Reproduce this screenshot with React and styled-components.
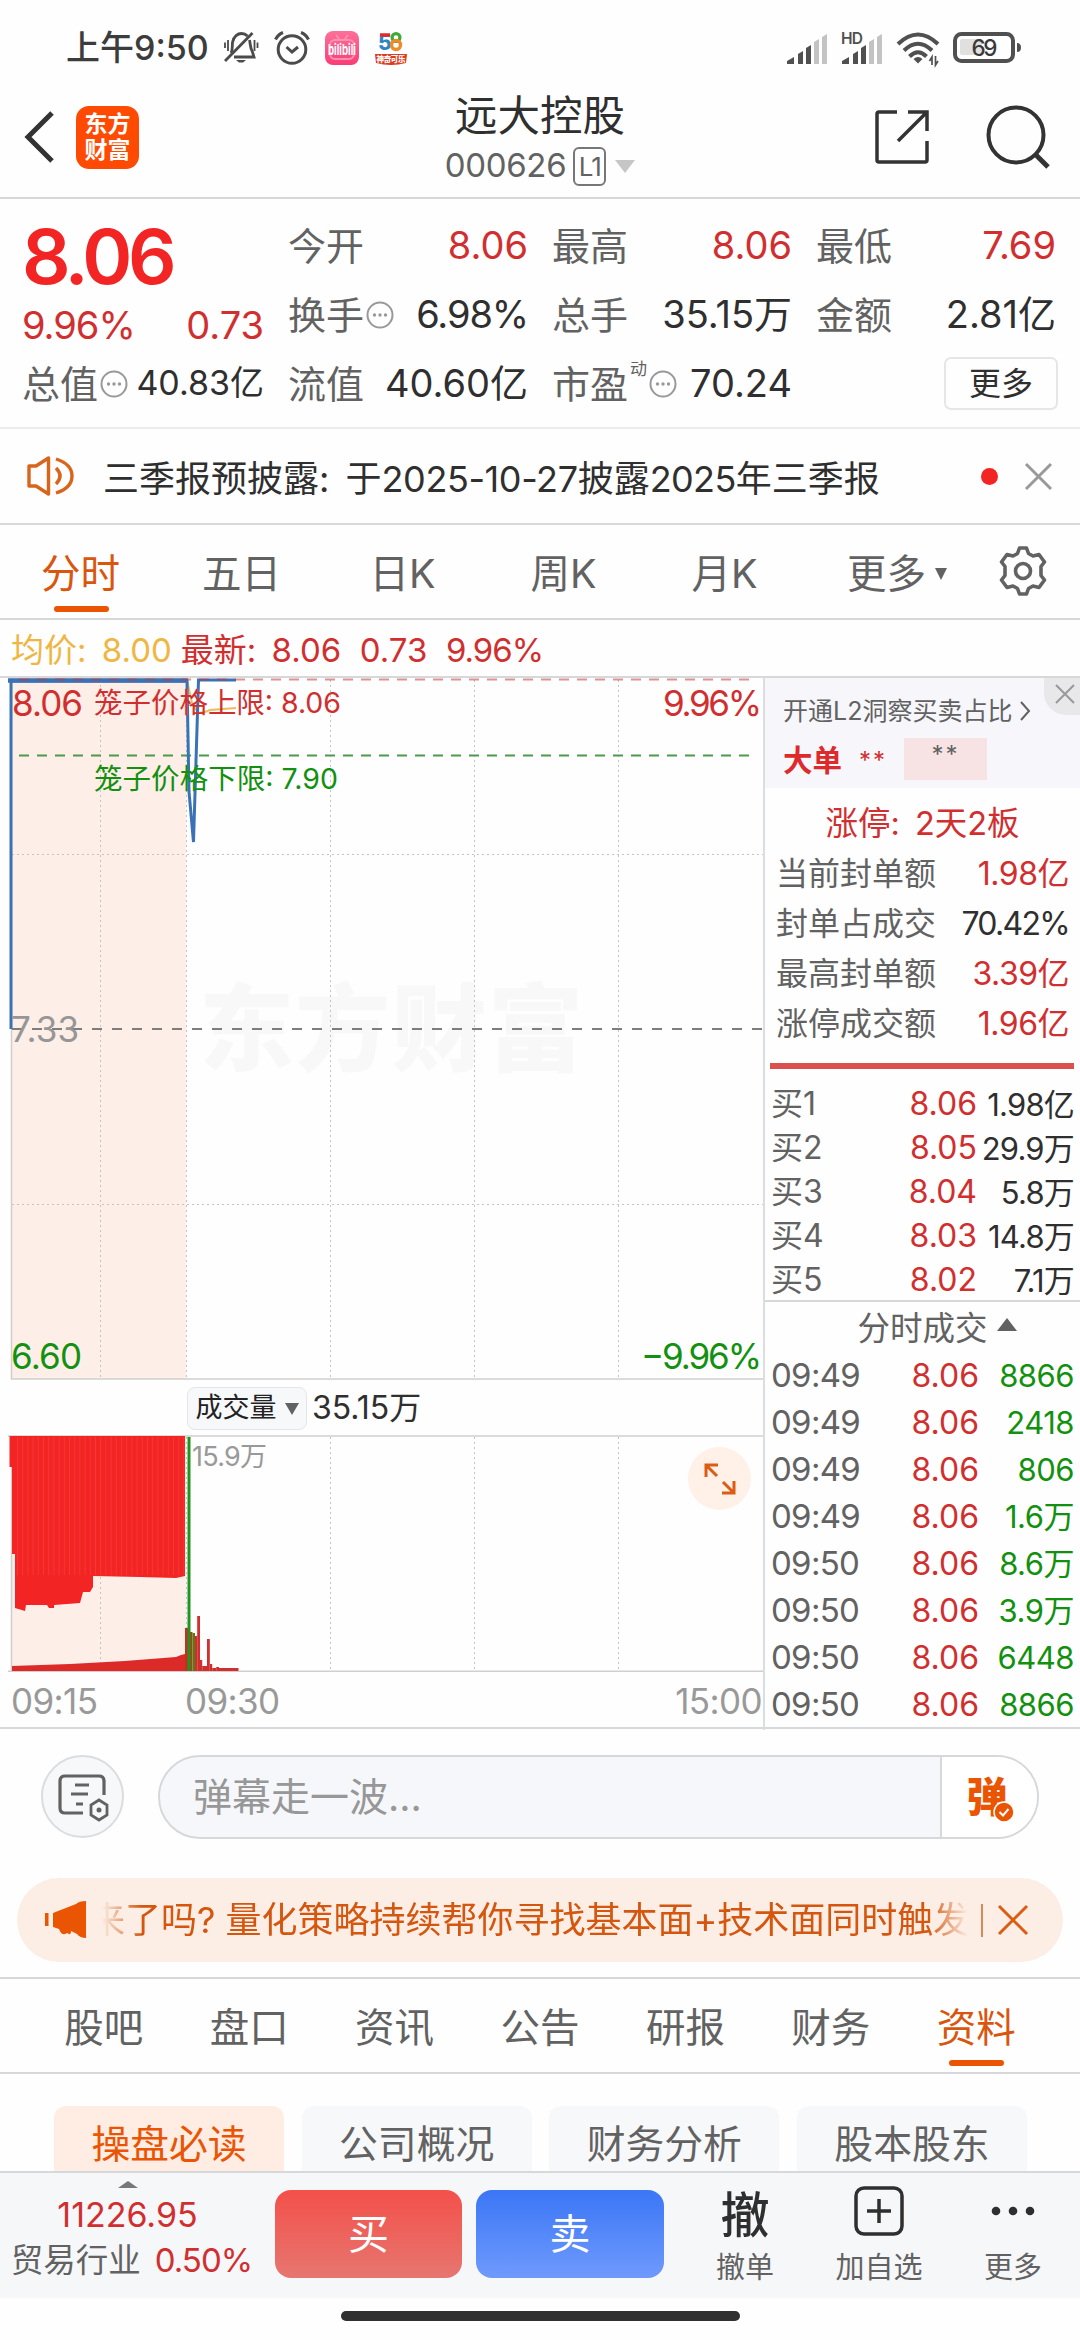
import React from "react";
import styled, { createGlobalStyle } from "styled-components";

const RED = "#d12f2f";
const BRIGHT = "#f22424";
const GREEN = "#12900f";
const ORANGE = "#ea5504";
const DARK = "#2f2f2f";
const GREY = "#626262";
const LINE = "#d6d8da";

const GlobalStyle = createGlobalStyle`
    * {
        box-sizing: border-box;
    }
    body {
        margin: 0;
        background: #fff;
        font-family: Inter, "Noto Sans CJK SC", sans-serif;
        color: ${DARK};
    }
    button {
        font-family: inherit;
        padding: 0;
        margin: 0;
        border: none;
        background: none;
    }
    svg {
        display: block;
        flex: none;
        overflow: visible;
    }
`;

const Page = styled.div`
    width: 1080px;
    height: 2340px;
    overflow: hidden;
    display: flex;
    flex-direction: column;
    background: #fefefe;
`;

const Txt = styled.span`
    font-size: ${(p) => p.$size || 32}px;
    line-height: 1.2;
    font-weight: ${(p) => p.$weight || 400};
    letter-spacing: ${(p) => p.$ls || 0}px;
    color: ${(p) => p.$color || "inherit"};
    white-space: pre;
`;

// colon followed by a wider gap, as after Chinese labels
const Colon = styled.span`
    letter-spacing: 6px;

    &::after {
        content: ":";
    }
`;

const Num = styled.span`
    letter-spacing: ${(p) => p.$ls}px;
`;

/* ---------- status bar ---------- */
const StatusBar = styled.div`
    height: 92px;
    padding: 4px 58px 0 66px;
    display: flex;
    justify-content: space-between;
    align-items: center;
`;

const StatusGroup = styled.div`
    display: flex;
    align-items: center;
    gap: ${(p) => p.$gap || 0}px;
`;

/* ---------- header ---------- */
const Header = styled.header`
    height: 107px;
    border-bottom: 2px solid ${LINE};
    padding: 0 30px 0 24px;
    display: grid;
    grid-template-columns: 1fr auto 1fr;
    align-items: center;
`;

const HeaderSide = styled.div`
    display: flex;
    align-items: center;
    justify-content: ${(p) => (p.$end ? "flex-end" : "flex-start")};
    gap: ${(p) => (p.$end ? 57 : 21)}px;
    padding-bottom: 15px;
`;

const Logo = styled.div`
    width: 63px;
    height: 63px;
    border-radius: 13px;
    background: #fe4a02;
    color: #fff;
    font-size: 23px;
    line-height: 26px;
    font-weight: 700;
    text-align: center;
    padding-top: 5px;
`;

const Title = styled.div`
    display: flex;
    flex-direction: column;
    align-items: center;
    padding: 0 0 5px 6px;
`;

const Name = styled.div`
    font-size: 42.5px;
    line-height: 50px;
    margin-top: -2px;
`;

const Code = styled.div`
    display: flex;
    align-items: center;
    height: 50px;
    color: ${GREY};
`;

const Level = styled.span`
    width: 33px;
    height: 39px;
    margin: 0 9px 0 7px;
    border: 2px solid #777;
    border-radius: 6px;
    font-size: 26px;
    line-height: 35px;
    text-align: center;
    letter-spacing: -1px;
`;

const Triangle = styled.i`
    width: 0;
    height: 0;
    border-left: ${(p) => p.$w / 2}px solid transparent;
    border-right: ${(p) => p.$w / 2}px solid transparent;
    ${(p) => (p.$up ? "border-bottom" : "border-top")}: ${(p) => p.$h}px solid
        ${(p) => p.$color};
`;

/* ---------- quote ---------- */
const Quote = styled.section`
    height: 230px;
    padding: 12px 24px 0 22px;
    border-bottom: 2px solid #ebecee;
    display: grid;
    grid-template-columns: 242px 792px;
`;

const PriceCol = styled.div`
    display: flex;
    flex-direction: column;
`;

const BigPrice = styled.div`
    height: 91px;
    font-size: 76px;
    line-height: 91px;
    font-weight: 600;
    letter-spacing: -4.4px;
    color: ${BRIGHT};
`;

const Pair = styled.div`
    height: ${(p) => p.$h || 69}px;
    display: flex;
    align-items: center;
    justify-content: space-between;
`;

const Label = styled.span`
    display: flex;
    align-items: center;
    gap: 2px;
    font-size: 38px;
    line-height: 46px;
    color: ${GREY};
`;

const Sup = styled.sup`
    align-self: flex-start;
    font-size: 17px;
    line-height: 17px;
`;

const Stats = styled.div`
    display: grid;
    grid-template-columns: repeat(3, 240px);
    grid-auto-rows: 69px;
    column-gap: 24px;
    padding-left: 24px;
`;

const MoreButton = styled.button`
    justify-self: end;
    align-self: center;
    width: 114px;
    height: 53px;
    margin-right: -2px;
    border: 2px solid #e6e6e8;
    border-radius: 7px;
    font-size: 32px;
    line-height: 46px;
    color: ${DARK};
`;

/* ---------- notice ---------- */
const Notice = styled.section`
    height: 96px;
    padding: 0 28px 0 26px;
    border-bottom: 2px solid ${LINE};
    display: flex;
    align-items: center;
`;

const NoticeText = styled.div`
    flex: 1;
    padding-left: 29px;
    font-size: 36px;
    white-space: pre;
`;

const Dot = styled.i`
    width: 17px;
    height: 17px;
    border-radius: 50%;
    background: ${BRIGHT};
    margin-right: 27px;
`;

/* ---------- tabs ---------- */
const Tabs = styled.nav`
    height: ${(p) => p.$h || 95}px;
    border-top: ${(p) => (p.$ruled ? `2px solid ${LINE}` : "none")};
    border-bottom: 2px solid ${LINE};
    padding: ${(p) => p.$pad || 0};
    display: grid;
    grid-template-columns: ${(p) => p.$cols};
`;

const Tab = styled.button`
    display: flex;
    align-items: center;
    justify-content: center;
    gap: 9px;
    position: relative;
    font-size: 39.5px;
    line-height: 48px;
    padding: 4px 0 0 ${(p) => p.$pl || 0}px;
    color: ${(p) => (p.$active ? "#d9560f" : GREY)};

    &::after {
        content: "";
        display: ${(p) => (p.$active ? "block" : "none")};
        position: absolute;
        bottom: 6px;
        left: calc(50% - 27px);
        width: 55px;
        height: 6px;
        border-radius: 3px;
        background: ${ORANGE};
    }
`;

const GearTab = styled(Tab)`
    padding-top: 0;
    padding-bottom: 2px;
`;

/* ---------- chart + order book ---------- */
const Latest = styled.div`
    height: 58px;
    border-bottom: 2px solid ${LINE};
    padding: 6px 0 0 11px;
    display: flex;
    align-items: center;
    gap: 9px;
`;

const Market = styled.section`
    height: 1051px;
    border-bottom: 2px solid ${LINE};
    display: grid;
    grid-template-columns: 763px 317px;
`;

const ChartCol = styled.div`
    display: flex;
    flex-direction: column;
    position: relative;
`;

const VolumeHead = styled.div`
    height: 55px;
    padding: 2px 0 0 187px;
    display: flex;
    align-items: center;
    gap: 5px;
`;

const VolumeSelect = styled.button`
    width: 120px;
    height: 43px;
    border: 1px solid #e3e5e9;
    border-radius: 8px;
    background: #f7f8fa;
    display: flex;
    align-items: center;
    justify-content: center;
    gap: 8px;
    color: #222;
`;

const Expand = styled.button`
    position: absolute;
    left: 688px;
    top: 769px;
    width: 63px;
    height: 63px;
    border-radius: 50%;
    background: #fff0e8;
    display: flex;
    align-items: center;
    justify-content: center;
`;

const TimeAxis = styled.div`
    height: 58px;
    padding: 0 1px 0 11px;
    display: grid;
    grid-template-columns: 174px 1fr auto;
    align-items: center;
    color: #999;
`;

const Book = styled.aside`
    border-left: 2px solid #dcdde0;
    display: flex;
    flex-direction: column;
`;

const Promo = styled.div`
    position: relative;
    height: 110px;
    background: #f7f7fb;
    padding: 15px 18px 0 18px;
`;

const PromoTitle = styled.div`
    display: flex;
    align-items: center;
    gap: 7px;
    height: 36px;
    color: ${GREY};
`;

const PromoRow = styled.div`
    display: flex;
    align-items: center;
    gap: 17px;
    height: 50px;
    margin-top: 7px;
`;

const PinkBox = styled.div`
    width: 83px;
    height: 42px;
    margin-top: -4px;
    background: #f8e3e4;
    text-align: center;
    line-height: 38px;
`;

const PromoClose = styled.button`
    position: absolute;
    right: 0;
    top: 0;
    width: 36px;
    height: 37px;
    border-bottom-left-radius: 22px;
    background: #e8e8ea;
    display: flex;
    align-items: center;
    justify-content: center;
    padding-left: 5px;
    padding-bottom: 5px;
`;

const LimitTitle = styled.div`
    height: 60px;
    padding-top: 11px;
    display: flex;
    align-items: center;
    justify-content: center;
    color: ${RED};
`;

const LimitRow = styled.div`
    height: 50px;
    padding: 2px 11px 0 11px;
    display: flex;
    align-items: center;
    justify-content: space-between;
`;

const RedBar = styled.div`
    height: 6px;
    margin: 15px 6px 13px 5px;
    background: #d9504f;
`;

const BookRow = styled.div`
    height: ${(p) => p.$h}px;
    padding: 1px 6px 0 6px;
    display: grid;
    grid-template-columns: 1fr auto ${(p) => p.$last}px;
    align-items: center;

    & > :last-child {
        text-align: right;
    }
`;

const DealTitle = styled.div`
    margin-top: -2px;
    height: 52px;
    padding: 2px 0 0 29px;
    border-top: 2px solid ${LINE};
    display: flex;
    align-items: center;
    justify-content: center;
    gap: 9px;
    color: ${GREY};

    i {
        margin-bottom: 7px;
    }
`;

/* ---------- comment bar ---------- */
const Danmu = styled.section`
    height: 135px;
    padding: 0 41px 0 41px;
    display: flex;
    align-items: center;
    justify-content: space-between;
`;

const RoundButton = styled.button`
    width: 83px;
    height: 83px;
    border: 2px solid #dadde0;
    border-radius: 50%;
    background: #f7f8fa;
    display: flex;
    align-items: center;
    justify-content: center;
`;

const InputPill = styled.div`
    width: 881px;
    height: 84px;
    border: 2px solid ${LINE};
    border-radius: 42px;
    background: #f6f7fa;
    overflow: hidden;
    display: flex;
`;

const Placeholder = styled.div`
    flex: 1;
    padding-left: 33px;
    font-size: 39px;
    line-height: 80px;
    color: #979797;
`;

const SendToggle = styled.button`
    position: relative;
    width: 97px;
    border-left: 2px solid ${LINE};
    background: #fff;
    padding: 0 5px 5px 0;
    font-size: 41px;
    font-weight: 900;
    color: ${ORANGE};

    svg {
        position: absolute;
        left: 51px;
        top: 44px;
    }
`;

/* ---------- marquee banner ---------- */
const Banner = styled.section`
    height: 84px;
    margin: 14px 17px 15px;
    padding: 0 35px 0 27px;
    border-radius: 42px;
    background: #fceee5;
    display: flex;
    align-items: center;
`;

const Marquee = styled.div`
    flex: 1;
    margin: 0 13px 0 14px;
    overflow: hidden;
    display: flex;
    font-size: 36px;
    line-height: 52px;
    white-space: pre;
    color: #d4560f;
    mask-image: linear-gradient(
        90deg,
        transparent 0,
        #000 40px,
        #000 calc(100% - 40px),
        transparent 100%
    );

    span {
        margin-left: -13px;
    }
`;

const Divider = styled.i`
    width: 2px;
    height: 33px;
    background: #d98a5c;
    margin-right: 15px;
`;

/* ---------- chips ---------- */
const Chips = styled.div`
    height: 97px;
    padding: 32px 53px 0 54px;
    overflow: hidden;
    display: flex;
    justify-content: space-between;
`;

const Chip = styled.button`
    width: 230px;
    height: 80px;
    padding-bottom: 5px;
    border-radius: 12px;
    font-size: 38.8px;
    line-height: 60px;
    background: ${(p) => (p.$active ? "#ffede4" : "#f7f8fa")};
    color: ${(p) => (p.$active ? ORANGE : GREY)};
`;

/* ---------- bottom bar ---------- */
const BottomBar = styled.footer`
    height: 127px;
    border-top: 2px solid ${LINE};
    background: #f6f7f9;
    display: flex;
`;

const IndexBox = styled.div`
    width: 275px;
    padding: 8px 20px 0 0;
    display: flex;
    flex-direction: column;
    align-items: center;
    gap: 7px;
`;

const Industry = styled.div`
    display: flex;
    align-items: center;
    gap: 14px;
    margin-top: -2px;
    padding-left: 8px;
`;

const TradeButton = styled.button`
    width: ${(p) => p.$w}px;
    height: 88px;
    margin: 17px 14px 0 0;
    border-radius: 16px;
    color: #fff;
    font-size: 41px;
    line-height: 88px;
    background: ${(p) =>
        p.$sell
            ? "linear-gradient(#3b76f6, #6f9afc)"
            : "linear-gradient(#f4504a, #e77670)"};
`;

const Action = styled.button`
    width: 134px;
    display: flex;
    flex-direction: column;
    align-items: center;
    gap: 8px;
    color: ${DARK};
`;

const ActionIcon = styled.div`
    height: 70px;
    padding-top: 6px;
    display: flex;
    align-items: center;
    font-size: 49px;
    font-weight: 500;
`;

const HomeArea = styled.div`
    flex: 1;
    display: flex;
    justify-content: center;
    padding-top: 13px;
`;

const HomeBar = styled.div`
    width: 399px;
    height: 10px;
    border-radius: 5px;
    background: #303030;
`;

/* ---------- icons ---------- */
const Muted = () => (
    <svg width="36" height="36" viewBox="0 0 36 36" fill="none" stroke="#4b4b4b" strokeWidth="2.8">
        <path d="M8 23C10 20 9 16 9.500 12.500C10.500 6 15 3.500 18.500 3.500C21 3.500 23 4.500 24.500 6" />
        <path d="M26.500 10C27.500 14 27 18 29.500 22L31 27H11" />
        <path d="M2 31L29.500 3" />
        <path d="M5 10V21M2 12.500V18M31.500 10V21M34.500 12.500V18" strokeWidth="1.800" />
        <path d="M13 30H23L20 32.500H16Z" fill="#4b4b4b" stroke="none" />
    </svg>
);

const Alarm = () => (
    <svg width="36" height="36" viewBox="0 0 36 36" fill="none" stroke="#4b4b4b" strokeWidth="3">
        <circle cx="18" cy="19.500" r="13.800" />
        <path d="M1.500 9.500Q4 4.500 9 2.500M34.500 9.500Q32 4.500 27 2.500" />
        <path d="M12.500 17L18 22L24 17" />
    </svg>
);

const BiliIcon = () => (
    <svg width="34" height="34" viewBox="0 0 34 34">
        <defs>
            <linearGradient id="bili" x1="0" y1="0" x2="0" y2="1">
                <stop offset="0" stopColor="#fb7199" />
                <stop offset="1" stopColor="#fb3c76" />
            </linearGradient>
        </defs>
        <rect width="34" height="34" rx="8" fill="url(#bili)" />
        <rect x="5" y="9" width="24" height="19" rx="5" fill="none" stroke="#fd8fb0" strokeWidth="2" />
        <path d="M11 4L15 9M23 4L19 9" stroke="#fd8fb0" strokeWidth="2" />
        <text x="3" y="24" fontSize="15" fontWeight="700" fill="#fff" textLength="28" lengthAdjust="spacingAndGlyphs">
            bilibili
        </text>
    </svg>
);

const App58 = () => (
    <svg width="34" height="34" viewBox="0 0 34 34">
        <text x="4" y="18.500" fontSize="21" fontWeight="800" fill="#2a86c9">5</text>
        <path d="M6 4H16" stroke="#e02a2a" strokeWidth="3.500" />
        <circle cx="22" cy="6.500" r="3.900" fill="none" stroke="#42a836" strokeWidth="3.200" />
        <circle cx="22" cy="14" r="4.500" fill="none" stroke="#f08a24" strokeWidth="3.400" />
        <path d="M1 23H33L32 32Q17 36 2 32Z" fill="#dd3a1e" />
        <text x="2.500" y="31" fontSize="7.500" fontWeight="900" fill="#fff" textLength="29">神奇可乐</text>
    </svg>
);

const Signal = ({ hd }) => (
    <svg width="42" height="36" viewBox="0 0 42 36" fill="#505050">
        <path d="M1 34V31L8 27V34Z" />
        <path d="M12 34V24L17 21V34Z" />
        <path d="M20 34V18L25 15V34Z" />
        <path d="M28 34V12L33 9V34Z" fill="#c3c3c3" />
        <path d="M36 34V7L41 4V34Z" fill="#c3c3c3" />
        {hd && (
            <text x="0" y="14" fontSize="15.500" fontWeight="600" textLength="22">HD</text>
        )}
    </svg>
);

const Wifi = () => (
    <svg width="44" height="36" viewBox="0 0 44 36" fill="none" stroke="#505050" strokeWidth="4">
        <path d="M2 14Q22 -5 42 14" />
        <path d="M8 20.500Q22 7 36 20.500" />
        <path d="M13.500 26.500Q22 18 30.500 26.500" />
        <path d="M17.500 29Q22 25 26.500 29L22 33.500Z" fill="#505050" stroke="none" />
        <path d="M36 35V27L33.500 31M39.500 26V35L42 31" strokeWidth="1.700" />
    </svg>
);

const Battery = () => (
    <svg width="69" height="32" viewBox="0 0 69 32">
        <rect x="2" y="2" width="58" height="27" rx="6.500" fill="#fff" stroke="#505050" strokeWidth="4" />
        <rect x="7" y="7" width="22" height="16" rx="2" fill="#e0e0e0" />
        <path d="M64 11Q68 11 68 15.500T64 20Z" fill="#505050" />
        <text x="18.500" y="23.500" fontSize="22.500" fontWeight="500" fill="#3a3a3a" textLength="26">69</text>
    </svg>
);

const Info = () => (
    <svg width="28" height="28" viewBox="0 0 28 28" fill="none" stroke="#999" strokeWidth="2">
        <circle cx="14" cy="14" r="12.500" />
        <g fill="#999" stroke="none">
            <circle cx="8.500" cy="14" r="1.700" />
            <circle cx="14" cy="14" r="1.700" />
            <circle cx="19.500" cy="14" r="1.700" />
        </g>
    </svg>
);

const Cross = ({ size, color, w = 3 }) => (
    <svg width={size} height={size} viewBox={`0 0 ${size} ${size}`} stroke={color} strokeWidth={w}>
        <path d={`M1 1L${size - 1} ${size - 1}M${size - 1} 1L1 ${size - 1}`} />
    </svg>
);

const Gear = () => (
    <svg width="48" height="50" viewBox="0 0 48 50" fill="none" stroke="#626262" strokeWidth="3.600" strokeLinejoin="round">
        <path d="M20.500 2H27.500L29.500 7.500L34 10L40 8.500L45.500 16L42 20.500V29.500L45.500 34L40 41.500L34 40L29.500 42.500L27.500 48H20.500L18.500 42.500L14 40L8 41.500L2.500 34L6 29.500V20.500L2.500 16L8 8.500L14 10L18.500 7.500Z" />
        <circle cx="24" cy="25" r="7.500" />
    </svg>
);

const Speaker = () => (
    <svg width="48" height="40" viewBox="0 0 48 40" fill="none" stroke="#d9641c" strokeWidth="3.400" strokeLinejoin="round">
        <path d="M3 10H10L22.500 2V38L10 30H3Z" />
        <path d="M30 12Q38 20 30 28" />
        <path d="M30 3Q46 8 46 20T30 37" />
    </svg>
);

/* ---------- data ---------- */
const stats = [
    { label: "今开", value: "8.06", red: true },
    { label: "最高", value: "8.06", red: true },
    { label: "最低", value: "7.69", red: true },
    { label: "换手", value: "6.98%", info: true, ls: -1.1 },
    { label: "总手", value: "35.15万" },
    { label: "金额", value: "2.81亿" },
    { label: "流值", value: "40.60亿" },
    { label: "市盈", value: "70.24", sup: "动", info: true },
];

const limits = [
    ["当前封单额", "1.98亿", RED, -0.5],
    ["封单占成交", "70.42%", DARK, -1.7],
    ["最高封单额", "3.39亿", RED, -0.5],
    ["涨停成交额", "1.96亿", RED, -0.5],
];

const bids = [
    ["买1", "8.06", "1.98亿"],
    ["买2", "8.05", "29.9万"],
    ["买3", "8.04", "5.8万"],
    ["买4", "8.03", "14.8万"],
    ["买5", "8.02", "7.1万"],
];

const deals = [
    ["09:49", "8866"],
    ["09:49", "2418"],
    ["09:49", "806"],
    ["09:49", "1.6万"],
    ["09:50", "8.6万"],
    ["09:50", "3.9万"],
    ["09:50", "6448"],
    ["09:50", "8866"],
];

const periods = ["分时", "五日", "日K", "周K", "月K"];
const sections = ["股吧", "盘口", "资讯", "公告", "研报", "财务", "资料"];
const chips = ["操盘必读", "公司概况", "财务分析", "股本股东"];

// bars after the open: [x, width, height, colour]
const volumes = [
    [185, 3, 43, "#c4301e"],
    [190, 2.5, 39, "#a8401a"],
    [192.5, 2.5, 38, "#5a7a10"],
    [195, 2.2, 35, RED],
    [197.2, 2.8, 55, RED],
    [200, 2.2, 11, RED],
    [202.2, 4.8, 5, RED],
    [207, 2.8, 32, RED],
    [209.8, 2.4, 7, RED],
    [212.2, 4, 3, RED],
    [216.2, 2.8, 4, RED],
    [219, 19.5, 3, RED],
];

const gridX = [100.5, 186.5, 330.5, 474.5, 618.5];

function PriceChart() {
    return (
        <svg width="763" height="702" viewBox="0 678 763 702">
            <rect x="12" y="678" width="174" height="701" fill="#fdeee7" />
            <text x="199" y="1064" fontSize="95" fontWeight="900" fill="#f8f8f8" textLength="384">
                东方财富
            </text>
            <g stroke="#c4c4c4" strokeWidth="1" strokeDasharray="2 3">
                {gridX.map((x) => (
                    <path key={x} d={`M${x} 680V1379`} />
                ))}
                <path d="M12 854.500H763M12 1204.500H763" />
            </g>
            <path d="M11.500 678V1379H763" fill="none" stroke="#cfcfcf" strokeWidth="1.500" />
            <path d="M12 1029H763" stroke="#7d7d7d" strokeWidth="2" strokeDasharray="10 10" />
            <path d="M19 755.500H750" stroke="#4d9a4b" strokeWidth="1.800" strokeDasharray="10 8" />
            <path d="M187 680L192 703L198 713L205 712L210 710L236 708" fill="none" stroke="#efbc55" strokeWidth="2" />
            <path d="M11 1029V681H187L189 792L193.500 842L198.500 680H236" fill="none" stroke="#3a72b5" strokeWidth="3" />
            <path d="M8 680.500H188" stroke="#3a72b5" strokeWidth="4.500" />
            <path d="M19 679.500H750" stroke="#c43a3f" strokeOpacity="0.550" strokeWidth="2" strokeDasharray="10 8" />
            <g fontSize="35">
                <text x="12" y="716" fill={RED} textLength="71">8.06</text>
                <text x="663" y="716" fill={RED} textLength="99">9.96%</text>
                <text x="11" y="1042" fill="#969696" textLength="68">7.33</text>
                <text x="11" y="1369" fill={GREEN} textLength="71">6.60</text>
                <text x="641" y="1369" fill={GREEN} textLength="121">−9.96%</text>
            </g>
            <g fontSize="28.500">
                <text x="94" y="713" fill={RED} textLength="247">笼子价格上限: 8.06</text>
                <text x="94" y="789" fill={GREEN} textLength="244">笼子价格下限: 7.90</text>
            </g>
        </svg>
    );
}

function VolumeChart() {
    return (
        <svg width="763" height="237" viewBox="0 1435 763 237">
            <rect x="12" y="1437" width="174" height="234" fill="#fdeee7" />
            <g stroke="#c4c4c4" strokeWidth="1" strokeDasharray="2 3">
                {gridX.map((x) => (
                    <path key={x} d={`M${x} 1437V1671`} />
                ))}
            </g>
            <path d="M11.500 1436V1671M8 1436H763M8 1671.300H763" stroke="#cfcfcf" strokeWidth="1.500" />
            <path
                d="M9.500 1436H185V1576L176 1578L140 1577L93 1576V1587L90 1592H83L80 1603L54 1605V1608H49L47 1605H26L25 1611L15 1608V1554H12V1467H9.500Z"
                fill={BRIGHT}
            />
            <path d="M12 1671V1666L70 1664L125 1661L176 1657L181 1655L185 1654V1671Z" fill="#dc2a28" />
            <g stroke="#fb4a48" strokeWidth="0.500">
                {Array.from({ length: 33 }, (_, i) => (
                    <path key={i} d={`M${17.5 + i * 5.2} 1437V1575`} />
                ))}
            </g>
            {volumes.map(([x, w, h, color]) => (
                <rect key={x} x={x} y={1671 - h} width={w} height={h} fill={color} />
            ))}
            <rect x="187.500" y="1437" width="3" height="234" fill="#20941e" />
            <text x="192" y="1466" fontSize="27" fill="#999" textLength="75">15.9万</text>
        </svg>
    );
}

function Stat({ label, value, red, info, sup, ls }) {
    return (
        <Pair>
            <Label>
                {label}
                {sup && <Sup>{sup}</Sup>}
                {info && <Info />}
            </Label>
            <Txt $size={38} $ls={ls} $color={red ? RED : DARK}>
                {value}
            </Txt>
        </Pair>
    );
}

function OrderBook() {
    return (
        <Book>
            <Promo>
                <PromoTitle>
                    <Txt $size={25}>开通L2洞察买卖占比</Txt>
                    <svg width="12" height="20" viewBox="0 0 12 20" fill="none" stroke="#626262" strokeWidth="2">
                        <path d="M2 1L10 10L2 19" />
                    </svg>
                </PromoTitle>
                <PromoRow>
                    <Txt $size={29.5} $weight={700} $color="#dd2a2a">大单</Txt>
                    <Txt $size={24} $ls={2} $color={RED}>**</Txt>
                    <PinkBox>
                        <Txt $size={24} $ls={2} $color={GREY}>**</Txt>
                    </PinkBox>
                </PromoRow>
                <PromoClose>
                    <Cross size={20} color="#999" w={2} />
                </PromoClose>
            </Promo>
            <LimitTitle>
                <Txt $size={32.5}>
                    涨停
                    <Colon /> 2天2板
                </Txt>
            </LimitTitle>
            {limits.map(([label, value, color, ls]) => (
                <LimitRow key={label}>
                    <Txt $size={32} $color={GREY}>{label}</Txt>
                    <Txt $size={32} $ls={ls} $color={color}>{value}</Txt>
                </LimitRow>
            ))}
            <RedBar />
            {bids.map(([label, price, amount]) => (
                <BookRow key={label} $h={44} $last={97}>
                    <Txt $size={32} $color={GREY}>{label}</Txt>
                    <Txt $size={32} $color={RED}>{price}</Txt>
                    <Txt $size={31} $ls={-0.8}>{amount}</Txt>
                </BookRow>
            ))}
            <DealTitle>
                <Txt $size={32.5}>分时成交</Txt>
                <Triangle $up $w={20} $h={13} $color={GREY} />
            </DealTitle>
            {deals.map(([time, amount], i) => (
                <BookRow key={i} $h={47} $last={95}>
                    <Txt $size={33} $ls={-0.7} $color={GREY}>{time}</Txt>
                    <Txt $size={32} $color={RED}>8.06</Txt>
                    <Txt $size={31} $ls={-0.5} $color={GREEN}>{amount}</Txt>
                </BookRow>
            ))}
        </Book>
    );
}

export default function App() {
    return (
        <Page>
            <GlobalStyle />
            <StatusBar>
                <StatusGroup $gap={14}>
                    <Txt $size={34} $weight={500} $color="#3c3c3c">上午9:50</Txt>
                    <StatusGroup $gap={15}>
                        <Muted />
                        <Alarm />
                        <BiliIcon />
                        <App58 />
                    </StatusGroup>
                </StatusGroup>
                <StatusGroup $gap={13}>
                    <Signal />
                    <Signal hd />
                    <Wifi />
                    <Battery />
                </StatusGroup>
            </StatusBar>

            <Header>
                <HeaderSide>
                    <svg width="31" height="52" viewBox="0 0 31 52" fill="none" stroke="#333" strokeWidth="5">
                        <path d="M28 2L4 26L28 50" />
                    </svg>
                    <Logo>
                        东方
                        <br />
                        财富
                    </Logo>
                </HeaderSide>
                <Title>
                    <Name>远大控股</Name>
                    <Code>
                        <Txt $size={33} $ls={-0.3}>000626</Txt>
                        <Level>L1</Level>
                        <Triangle $w={21} $h={13} $color="#c6c6c6" />
                    </Code>
                </Title>
                <HeaderSide $end>
                    <svg width="54" height="54" viewBox="0 0 54 54" fill="none" stroke="#333" strokeWidth="3.500">
                        <path d="M22 2H4Q2 2 2 4V50Q2 52 4 52H50Q52 52 52 50V31" />
                        <path d="M33 2H52V21M52 2L23 31" />
                    </svg>
                    <svg width="64" height="64" viewBox="0 0 64 64" fill="none" stroke="#333" strokeWidth="4">
                        <circle cx="30" cy="30" r="27.500" />
                        <path d="M49 49L62 62" strokeWidth="5" />
                    </svg>
                </HeaderSide>
            </Header>

            <Quote>
                <PriceCol>
                    <BigPrice>8.06</BigPrice>
                    <Pair $h={47}>
                        <Txt $size={38} $ls={-1} $color={RED}>9.96%</Txt>
                        <Txt $size={38} $color={RED}>0.73</Txt>
                    </Pair>
                    <Pair>
                        <Label>
                            总值
                            <Info />
                        </Label>
                        <Txt $size={34}>40.83亿</Txt>
                    </Pair>
                </PriceCol>
                <Stats>
                    {stats.map((s) => (
                        <Stat key={s.label} {...s} />
                    ))}
                    <MoreButton>更多</MoreButton>
                </Stats>
            </Quote>

            <Notice>
                <Speaker />
                <NoticeText>
                    三季报预披露
                    <Colon /> 于<Num $ls={-0.4}>2025-10-27</Num>披露<Num $ls={-0.6}>2025</Num>年三季报
                </NoticeText>
                <Dot />
                <Cross size={27} color="#999" />
            </Notice>

            <Tabs $cols="repeat(5, 161px) 1fr 115px">
                {periods.map((p, i) => (
                    <Tab key={p} $active={i === 0}>{p}</Tab>
                ))}
                <Tab $pl={24}>
                    更多
                    <Triangle $w={13} $h={12} $color={GREY} />
                </Tab>
                <GearTab>
                    <Gear />
                </GearTab>
            </Tabs>

            <Latest>
                <Txt $size={33} $color="#efb643">
                    均价
                    <Colon /> 8.00
                </Txt>
                <Txt $size={33} $color={RED}>
                    最新
                    <Colon /> 8.06{"  "}0.73{"  "}
                    <Num $ls={-1}>9.96%</Num>
                </Txt>
            </Latest>

            <Market>
                <ChartCol>
                    <PriceChart />
                    <VolumeHead>
                        <VolumeSelect>
                            <Txt $size={27}>成交量</Txt>
                            <Triangle $w={14} $h={12} $color={GREY} />
                        </VolumeSelect>
                        <Txt $size={32}>35.15万</Txt>
                    </VolumeHead>
                    <VolumeChart />
                    <Expand>
                        <svg width="32" height="32" viewBox="0 0 32 32" fill="none" stroke="#dd5c14" strokeWidth="3">
                            <path d="M2 14V2H14M2 2L13 13" />
                            <path d="M30 18V30H18M30 30L19 19" />
                        </svg>
                    </Expand>
                    <TimeAxis>
                        <Txt $size={35} $ls={-0.6}>09:15</Txt>
                        <Txt $size={35} $ls={-0.6}>09:30</Txt>
                        <Txt $size={35} $ls={-0.6}>15:00</Txt>
                    </TimeAxis>
                </ChartCol>
                <OrderBook />
            </Market>

            <Danmu>
                <RoundButton>
                    <svg width="52" height="48" viewBox="0 0 52 48" fill="none" stroke="#626262" strokeWidth="3.200">
                        <path d="M26 40H8Q3 40 3 35V8Q3 3 8 3H42Q47 3 47 8V22" />
                        <path d="M18 12H32M14 21H31M19 31H26" />
                        <path d="M42 27L50 32V42L42 47L34 42V32Z" strokeWidth="2.800" />
                        <circle cx="42" cy="37" r="2.500" fill="#626262" stroke="none" />
                    </svg>
                </RoundButton>
                <InputPill>
                    <Placeholder>弹幕走一波...</Placeholder>
                    <SendToggle>
                        弹
                        <svg width="22" height="22" viewBox="0 0 22 22">
                            <circle cx="11" cy="11" r="10" fill={ORANGE} stroke="#fff" strokeWidth="1.500" />
                            <path d="M6.500 11L10 14.500L15.500 8" fill="none" stroke="#fff" strokeWidth="2" />
                        </svg>
                    </SendToggle>
                </InputPill>
            </Danmu>

            <Banner>
                <svg width="44" height="38" viewBox="0 0 44 38" fill={ORANGE}>
                    <path d="M1 12H4.500V25H1ZM9 12L32 3Q35 0 42 0V37Q36 37 33 33L31 32L27 30Q27 35 23 32Q18 36 15 28L9 26Z" />
                </svg>
                <Marquee>
                    <span>来了吗? 量化策略持续帮你寻找基本面+技术面同时触发</span>
                </Marquee>
                <Divider />
                <Cross size={30} color="#dd5c14" />
            </Banner>

            <Tabs $h={97} $ruled $cols="repeat(7, 1fr)" $pad="0 31px">
                {sections.map((s) => (
                    <Tab key={s} $active={s === "资料"}>{s}</Tab>
                ))}
            </Tabs>

            <Chips>
                {chips.map((c, i) => (
                    <Chip key={c} $active={i === 0}>{c}</Chip>
                ))}
            </Chips>

            <BottomBar>
                <IndexBox>
                    <Triangle $up $w={20} $h={7} $color="#777" />
                    <Txt $size={34} $color={RED}>11226.95</Txt>
                    <Industry>
                        <Txt $size={32.5} $color={GREY}>贸易行业</Txt>
                        <Txt $size={33} $ls={-1} $color={RED}>0.50%</Txt>
                    </Industry>
                </IndexBox>
                <TradeButton $w={187}>买</TradeButton>
                <TradeButton $w={188} $sell>卖</TradeButton>
                <Action>
                    <ActionIcon>撤</ActionIcon>
                    <Txt $size={29} $color={GREY}>撤单</Txt>
                </Action>
                <Action>
                    <ActionIcon>
                        <svg width="50" height="50" viewBox="0 0 50 50" fill="none" stroke="#2f2f2f" strokeWidth="3.500">
                            <rect x="2" y="2" width="46" height="46" rx="8" />
                            <path d="M25 13V37M13 25H37" />
                        </svg>
                    </ActionIcon>
                    <Txt $size={29} $color={GREY}>加自选</Txt>
                </Action>
                <Action>
                    <ActionIcon>
                        <svg width="44" height="10" viewBox="0 0 44 10" fill="#2f2f2f">
                            <circle cx="5" cy="5" r="4.300" />
                            <circle cx="22" cy="5" r="4.300" />
                            <circle cx="39" cy="5" r="4.300" />
                        </svg>
                    </ActionIcon>
                    <Txt $size={29} $color={GREY}>更多</Txt>
                </Action>
            </BottomBar>

            <HomeArea>
                <HomeBar />
            </HomeArea>
        </Page>
    );
}
